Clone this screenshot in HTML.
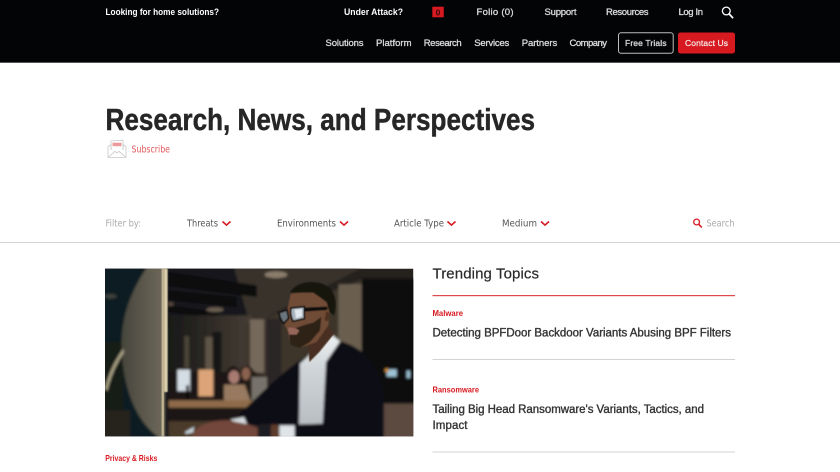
<!DOCTYPE html>
<html lang="en">
<head>
<meta charset="utf-8">
<title>Research, News, and Perspectives</title>
<style>
html,body{margin:0;padding:0;width:840px;height:472px;overflow:hidden;background:#fff}
svg{display:block}
text{font-family:"Liberation Sans",sans-serif}
.n{fill:#dcdcdc;stroke:#dcdcdc;stroke-width:.3px;font-size:9.5px}
.f{fill:#555;font-family:"DejaVu Sans",sans-serif;font-size:10px}
.g{fill:#aaa;font-family:"DejaVu Sans",sans-serif;font-size:10px}
.r{fill:#d71920;font-size:8.5px;font-weight:700}
.t{fill:#333;stroke:#333;stroke-width:.36px;font-size:11.5px}
</style>
</head>
<body>
<svg width="840" height="472" viewBox="0 0 840 472" xmlns="http://www.w3.org/2000/svg">
<defs>
<filter id="b1" x="-5%" y="-5%" width="110%" height="110%"><feGaussianBlur stdDeviation="3.6"/></filter>
<filter id="b3" x="-10%" y="-10%" width="120%" height="120%"><feGaussianBlur stdDeviation="1.6"/></filter>
<linearGradient id="mon" x1="0" x2="1" y1="0" y2="0"><stop offset="0" stop-color="#47463d"/><stop offset="1" stop-color="#6f695b"/></linearGradient>
<linearGradient id="wall" x1="0" x2="1" y1="0" y2="0"><stop offset="0" stop-color="#191918"/><stop offset="0.5" stop-color="#2e2a25"/><stop offset="1" stop-color="#463d34"/></linearGradient>
<linearGradient id="shirt" x1="0" x2="0" y1="0" y2="1"><stop offset="0" stop-color="#eef1f3"/><stop offset="0.4" stop-color="#cfd4d8"/><stop offset="1" stop-color="#b9bec3"/></linearGradient>
<clipPath id="ph"><rect x="15" y="20" width="925" height="503"/></clipPath>
</defs>

<!-- header -->
<rect width="840" height="62" fill="#020406"/>
<rect y="62" width="840" height="1" fill="#555"/>
<text x="105.500" y="15" fill="#fff" font-size="9.500px" font-weight="700" textLength="113.500" lengthAdjust="spacingAndGlyphs">Looking for home solutions?</text>
<text x="344" y="15" fill="#fff" font-size="9.500px" font-weight="700" textLength="59" lengthAdjust="spacingAndGlyphs">Under Attack?</text>
<rect x="432.300" y="6.700" width="11.500" height="10.600" fill="#d71920"/>
<text x="438" y="15.500" fill="#3a0a0c" font-size="8.500" font-weight="700" text-anchor="middle">0</text>
<text x="476.500" y="15" class="n" textLength="37" lengthAdjust="spacing">Folio (0)</text>
<text x="544.500" y="15" class="n" textLength="32" lengthAdjust="spacing">Support</text>
<text x="606" y="15" class="n" textLength="42.500" lengthAdjust="spacing">Resources</text>
<text x="678.500" y="15" class="n" textLength="24.500" lengthAdjust="spacing">Log In</text>
<circle cx="726.300" cy="11" r="3.900" fill="none" stroke="#fff" stroke-width="1.300"/>
<path d="M729.200 14l3.900 4.200" stroke="#fff" stroke-width="1.700" fill="none"/>

<text x="325.500" y="46" class="n" textLength="38" lengthAdjust="spacing">Solutions</text>
<text x="376" y="46" class="n" textLength="35.500" lengthAdjust="spacing">Platform</text>
<text x="423.700" y="46" class="n" textLength="38" lengthAdjust="spacing">Research</text>
<text x="474.300" y="46" class="n" textLength="35" lengthAdjust="spacing">Services</text>
<text x="521.700" y="46" class="n" textLength="35.500" lengthAdjust="spacing">Partners</text>
<text x="569.500" y="46" class="n" textLength="37.500" lengthAdjust="spacing">Company</text>
<rect x="618.500" y="32.800" width="54.700" height="20.400" rx="2.500" fill="none" stroke="#bdbdbd" stroke-width="1"/>
<text x="625" y="46" class="n" style="font-size:8.500px" textLength="41.500" lengthAdjust="spacing">Free Trials</text>
<rect x="678" y="32.500" width="57" height="21" rx="2.500" fill="#d71920"/>
<text x="685" y="46" fill="#f6e6e6" stroke="#f6e6e6" stroke-width=".25" font-size="8.500px" textLength="43" lengthAdjust="spacing">Contact Us</text>

<!-- title -->
<text x="105.500" y="130" fill="#262626" stroke="#262626" stroke-width=".45" font-size="31px" font-weight="700" textLength="429.500" lengthAdjust="spacingAndGlyphs">Research, News, and Perspectives</text>
<g fill="none" stroke="#c9c9c9" stroke-width="0.800">
<path d="M108 146.500v10.900h18v-10.900"/>
<path d="M108 146.500l3-2v5.500M126 146.500l-3-2v5.500"/>
<path d="M111 150v-9l12-.8v9.800"/>
<path d="M108 157.400l7-6 2 1.500 2-1.500 7 6"/>
</g>
<rect x="112.500" y="142.700" width="9" height="3.500" fill="#ee9a9a"/>
<text x="131.500" y="152.500" fill="#e2595d" style="font-family:'DejaVu Sans',sans-serif" font-size="10px" textLength="38.500" lengthAdjust="spacingAndGlyphs">Subscribe</text>

<!-- filter bar -->
<text x="105.500" y="226.500" class="g" textLength="35.500" lengthAdjust="spacingAndGlyphs">Filter by:</text>
<text x="187" y="226.500" class="f" textLength="31" lengthAdjust="spacingAndGlyphs">Threats</text>
<path d="M222.500 221.500l4 3.600 4-3.600" fill="none" stroke="#d71920" stroke-width="1.600"/>
<text x="277" y="226.500" class="f" textLength="59" lengthAdjust="spacingAndGlyphs">Environments</text>
<path d="M340 221.500l4 3.600 4-3.600" fill="none" stroke="#d71920" stroke-width="1.600"/>
<text x="394" y="226.500" class="f" textLength="50" lengthAdjust="spacingAndGlyphs">Article Type</text>
<path d="M447.500 221.500l4 3.600 4-3.600" fill="none" stroke="#d71920" stroke-width="1.600"/>
<text x="502" y="226.500" class="f" textLength="35" lengthAdjust="spacingAndGlyphs">Medium</text>
<path d="M541 221.500l4 3.600 4-3.600" fill="none" stroke="#d71920" stroke-width="1.600"/>
<circle cx="696.600" cy="222" r="2.900" fill="none" stroke="#d71920" stroke-width="1.300"/>
<path d="M698.800 224.300l3 3.200" stroke="#d71920" stroke-width="1.600"/>
<text x="706.500" y="226.500" class="g" textLength="28" lengthAdjust="spacingAndGlyphs">Search</text>
<rect y="242" width="840" height="1" fill="#d3d3d3"/>

<!-- photo -->
<g transform="translate(100 262) scale(.33333)">
<g clip-path="url(#ph)">
<rect x="15" y="20" width="925" height="503" fill="#25211d"/>
<g filter="url(#b1)">
<rect x="0" y="0" width="205" height="540" fill="#0b1d23"/>
<rect x="0" y="240" width="70" height="300" fill="#181a19"/>
<path d="M200 0H800L440 200l-240 0z" fill="#14171a"/>
<path d="M400 10H800L570 130 450 190z" fill="#37322c"/>
<path d="M205 30l265 40v35L205 72z" fill="#08090a"/>
<path d="M205 85l205 20v30L205 115z" fill="#090a0b"/>
<path d="M205 130l150 20v20L205 150z" fill="#0a0b0c"/>
<rect x="205" y="160" width="250" height="260" fill="url(#wall)"/>
<path d="M440 190L790 50V320L440 420z" fill="#3c342c"/>
<rect x="450" y="172" width="42" height="160" fill="#75695b"/>
<rect x="500" y="170" width="44" height="220" fill="#2c2825"/>
<rect x="715" y="66" width="70" height="240" fill="#6a5e50"/>
<rect x="785" y="50" width="170" height="375" fill="#0f0f10"/>
<rect x="850" y="425" width="100" height="110" fill="#5c4a40"/>
<rect x="253" y="222" width="14" height="95" fill="#4c4439"/>
<rect x="316" y="225" width="22" height="100" fill="#5e5447"/>
<rect x="338" y="210" width="26" height="180" fill="#151413"/>
<ellipse cx="528" cy="38" rx="34" ry="10" fill="#8a7d6c"/>
<ellipse cx="345" cy="143" rx="26" ry="7" fill="#6b5f50"/>
<ellipse cx="32" cy="103" rx="18" ry="7" fill="#3e403c"/>
<ellipse cx="212" cy="126" rx="9" ry="6" fill="#5a4a3e"/>
<!-- background desk scene -->
<rect x="205" y="330" width="265" height="90" fill="#1a1714"/>
<rect x="232" y="323" width="38" height="64" fill="#d4dde4"/>
<rect x="295" y="323" width="45" height="80" fill="#dca478"/>
<rect x="258" y="370" width="9" height="45" fill="#111"/>
<path d="M378 330q22-36 44 0l0 40h-44z" fill="#1d1512"/>
<ellipse cx="402" cy="345" rx="16" ry="20" fill="#a97c72"/>
<path d="M422 320q26-24 44 15l38 10v70h-64z" fill="#241a17"/>
<ellipse cx="438" cy="335" rx="13" ry="19" fill="#8a6250"/>
<rect x="455" y="345" width="46" height="70" fill="#77736c"/>
<path d="M372 368h62l18 50h-80z" fill="#987a60"/>
<rect x="205" y="415" width="265" height="22" fill="#8e6b48"/>
<rect x="205" y="437" width="230" height="40" fill="#1a1612"/>
<path d="M205 478h190l-80 50H205z" fill="#4b3a2c"/>
<!-- monitor -->
<path d="M145 10C90 90 62 170 65 260c4 120 45 225 118 270h12V10z" fill="url(#mon)"/>
<path d="M15 380q15-65 55-120l2 12q-35 50-50 115z" fill="#a9a185"/>
<rect x="0" y="445" width="90" height="90" fill="#26221e"/>
<rect x="194" y="390" width="12" height="140" fill="#12161a"/>
<!-- right screen glow -->
<rect x="860" y="322" width="30" height="22" fill="#9fc3d6"/>
<rect x="920" y="326" width="10" height="22" fill="#9fc3d6"/>
<circle cx="860" cy="325" r="6" fill="#c98b3a"/>
<!-- person torso -->
<path d="M400 470C450 430 520 350 600 295L725 238C800 262 850 320 852 420V530H580L540 490H420z" fill="#101117"/>
<path d="M600 305L622 285 692 215 720 238 678 300 668 485 597 487z" fill="url(#shirt)"/>
<rect x="538" y="490" width="46" height="38" fill="#dfe4e8"/>
<path d="M390 473l42-8 12 28-30-8z" fill="#d5dade"/>
<!-- hand -->
<path d="M275 530c5-36 50-57 110-55l60 12 35 12v31z" fill="#73473a"/>
<path d="M480 488h55l5 40h-60z" fill="#5d3b2c"/>
<rect x="473" y="488" width="40" height="40" fill="#1f1f20"/>
<path d="M255 510l28-16-4 18-22 4z" fill="#c8d3da"/>
</g>
<g filter="url(#b3)">
<!-- neck and head -->
<path d="M625 245l50-65 28 35-45 55-30 30z" fill="#4a2f20"/>
<path d="M572 95L640 88 690 130 685 190 650 240 600 258 572 245 562 205 552 185 560 150z" fill="#6f4b36"/>
<path d="M566 207Q600 192 640 182L664 165 660 205 630 240 600 258 572 248z" fill="#2e2019"/>
<path d="M563 198q18-5 35 8l-8 12h-22z" fill="#96665a"/>
<path d="M570 92C590 55 660 50 690 80 712 105 708 140 702 160L688 150 680 120 640 92z" fill="#131211"/>
<path d="M678 150c12-6 16 22 2 28l-6-5z" fill="#4e3224"/>
<!-- glasses -->
<path d="M612 137l70-3v10l-68 5z" fill="#0f0f10"/>
<path d="M573 138l40-4 0 36-34 8q-10-20-6-40z" fill="#a9b4bc" stroke="#0f0f10" stroke-width="5"/>
<path d="M584 143l22-2 0 22-18 6z" fill="#e2e9ee"/>
<path d="M537 152l24-8 5 24-14 16q-12-10-15-32z" fill="#6b747c" stroke="#0f0f10" stroke-width="5"/>
</g>
<rect x="185" y="20" width="7" height="503" fill="#cbbd98" filter="url(#b3)"/>
<rect x="192" y="20" width="11" height="370" fill="#dccfab" filter="url(#b3)"/>
</g>
</g>

<!-- left card tag -->
<text x="105.300" y="461" class="r" textLength="52" lengthAdjust="spacingAndGlyphs">Privacy &amp; Risks</text>

<!-- trending -->
<text x="432.500" y="278.500" fill="#2a2a2a" stroke="#2a2a2a" stroke-width=".2" font-size="15px" textLength="106.500" lengthAdjust="spacing">Trending Topics</text>
<rect x="432.500" y="295" width="302.500" height="1.200" fill="#e0484d"/>
<text x="432.500" y="316" class="r" textLength="30.500" lengthAdjust="spacingAndGlyphs">Malware</text>
<text x="432.500" y="336.500" class="t" textLength="298.500" lengthAdjust="spacing">Detecting BPFDoor Backdoor Variants Abusing BPF Filters</text>
<rect x="432.500" y="359" width="302.500" height="1" fill="#d3d3d3"/>
<text x="432.500" y="392.500" class="r" textLength="46.500" lengthAdjust="spacingAndGlyphs">Ransomware</text>
<text x="432.500" y="413" class="t" textLength="271.500" lengthAdjust="spacing">Tailing Big Head Ransomware's Variants, Tactics, and</text>
<text x="432.500" y="429" class="t" textLength="35" lengthAdjust="spacing">Impact</text>
<rect x="432.500" y="451.500" width="302.500" height="1" fill="#d3d3d3"/>
</svg>
</body>
</html>
